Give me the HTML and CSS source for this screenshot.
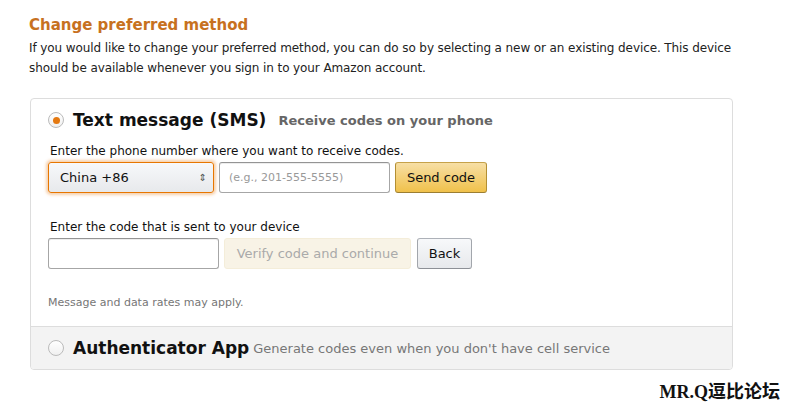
FILE: index.html
```html
<!DOCTYPE html>
<html lang="en">
<head>
    <meta charset="UTF-8">
    <meta name="viewport" content="width=device-width, initial-scale=1.0">
    <title>Change preferred method</title>
    <link rel="stylesheet" href="styles.css">
</head>
<body>
    <h2 class="title">Change preferred method</h2>
    <p class="intro">If you would like to change your preferred method, you can do so by selecting a new or an existing device. This device should be available whenever you sign in to your Amazon account.</p>

    <div class="methods">
        <div class="method method-sms">
            <div class="method-head">
                <span class="radio checked"></span>
                <span class="method-name">Text message (SMS)</span>
                <span class="method-note bold">Receive codes on your phone</span>
            </div>
            <div class="method-body">
                <label class="field-label">Enter the phone number where you want to receive codes.</label>
                <div class="row">
                    <div class="select">
                        <span>China +86</span>
                        <span class="arrows">&#8661;</span>
                    </div>
                    <input type="text" class="input phone" placeholder="(e.g., 201-555-5555)">
                    <button class="btn btn-primary">Send code</button>
                </div>

                <label class="field-label second">Enter the code that is sent to your device</label>
                <div class="row">
                    <input type="text" class="input code">
                    <button class="btn btn-disabled">Verify code and continue</button>
                    <button class="btn btn-secondary">Back</button>
                </div>

                <p class="small-note">Message and data rates may apply.</p>
            </div>
        </div>
        <div class="method method-app">
            <div class="method-head">
                <span class="radio"></span>
                <span class="method-name">Authenticator App</span>
                <span class="method-note">Generate codes even when you don't have cell service</span>
            </div>
        </div>
    </div>

    <div class="watermark">MR.Q逗比论坛</div>
</body>
</html>
```

FILE: styles.css
```css
body {
    font-family: "DejaVu Sans", Verdana, sans-serif;
    background-color: #fff;
    color: #111;
    margin: 0;
    padding: 15px 8px 0 29px;
}

.title {
    font-size: 15px;
    font-weight: bold;
    color: #c7711f;
    margin: 0 0 3px 0;
    line-height: 20px;
}

.intro {
    font-size: 12px;
    line-height: 20px;
    margin: 0 0 20px 0;
    width: 720px;
    letter-spacing: -0.1px;
    color: #222;
}

.methods {
    margin-left: 1px;
    width: 701px;
    border: 1px solid #ddd;
    border-radius: 4px;
    overflow: hidden;
}

.method {
    padding: 0 17px;
}

.method-head {
    display: flex;
    align-items: center;
    height: 40px;
}

.method-sms .method-head {
    margin-top: 1px;
}

.radio {
    width: 16px;
    height: 16px;
    border: 1px solid #bbb;
    border-radius: 50%;
    background: linear-gradient(#fff, #f0f0f0);
    box-sizing: border-box;
    margin-right: 9px;
    position: relative;
    flex-shrink: 0;
}

.radio.checked::after {
    content: "";
    position: absolute;
    left: 3.5px;
    top: 3.5px;
    width: 7px;
    height: 7px;
    border-radius: 50%;
    background: #e47911;
}

.method-name {
    font-size: 17px;
    font-weight: bold;
    color: #111;
    margin-right: 12px;
}

.method-app .method-name {
    margin-right: 4px;
}

.method-note {
    font-size: 13px;
    color: #777;
}

.method-note.bold {
    font-weight: bold;
    color: #666;
}

.method-body {
    padding: 2px 0 17px 0;
}

.field-label {
    display: block;
    font-size: 12px;
    line-height: 18px;
    color: #111;
    margin: 0 0 2px 2px;
}

.field-label.second {
    margin-top: 25px;
}

.row {
    display: flex;
    gap: 5px;
}

.select {
    width: 166px;
    height: 31px;
    box-sizing: border-box;
    border: 1px solid #e77600;
    box-shadow: 0 0 3px 2px rgba(228, 121, 17, 0.35);
    border-radius: 3px;
    background: linear-gradient(#f7f8fa, #e7e9ec);
    display: flex;
    align-items: center;
    justify-content: space-between;
    padding: 0 6px 0 11px;
    font-size: 13px;
    color: #111;
}

.arrows {
    font-size: 10px;
    color: #555;
}

.input {
    height: 31px;
    box-sizing: border-box;
    border: 1px solid #a6a6a6;
    border-top-color: #949494;
    border-radius: 3px;
    padding: 0 9px;
    font-family: inherit;
    font-size: 11px;
    box-shadow: 0 1px 0 rgba(0, 0, 0, 0.07) inset;
}

.input::placeholder {
    color: #999;
}

.phone {
    width: 171px;
}

.code {
    width: 171px;
}

.btn {
    height: 31px;
    box-sizing: border-box;
    border-radius: 3px;
    font-family: inherit;
    font-size: 13px;
    padding: 0;
    white-space: nowrap;
    cursor: pointer;
}

.btn-primary {
    width: 92px;
    background: linear-gradient(#f7dfa5, #f0c14b);
    border: 1px solid #a88734;
    border-color: #c6a24a #b38f33 #9c7e31;
    color: #111;
}

.btn-disabled {
    width: 187px;
    background: #f8f3e6;
    border: 1px solid #f4edd9;
    color: #aaa;
    cursor: default;
}

.btn-secondary {
    width: 55px;
    margin-left: 1px;
    background: linear-gradient(#f7f8fa, #e7e9ec);
    border: 1px solid #adb1b8;
    border-color: #adb1b8 #a2a6ac #8d9096;
    color: #111;
}

.small-note {
    font-size: 11px;
    color: #767676;
    margin: 27px 0 0 0;
}

.method-app {
    background: #f3f3f3;
    border-top: 1px solid #ddd;
}

.method-app .method-head {
    height: 42px;
}

.watermark {
    text-align: right;
    margin-top: 7px;
    font-family: "Liberation Serif", "Noto Sans CJK SC", serif;
    font-weight: bold;
    font-size: 18px;
    color: #111;
    text-shadow: 0 0 3px #fff;
}
```
